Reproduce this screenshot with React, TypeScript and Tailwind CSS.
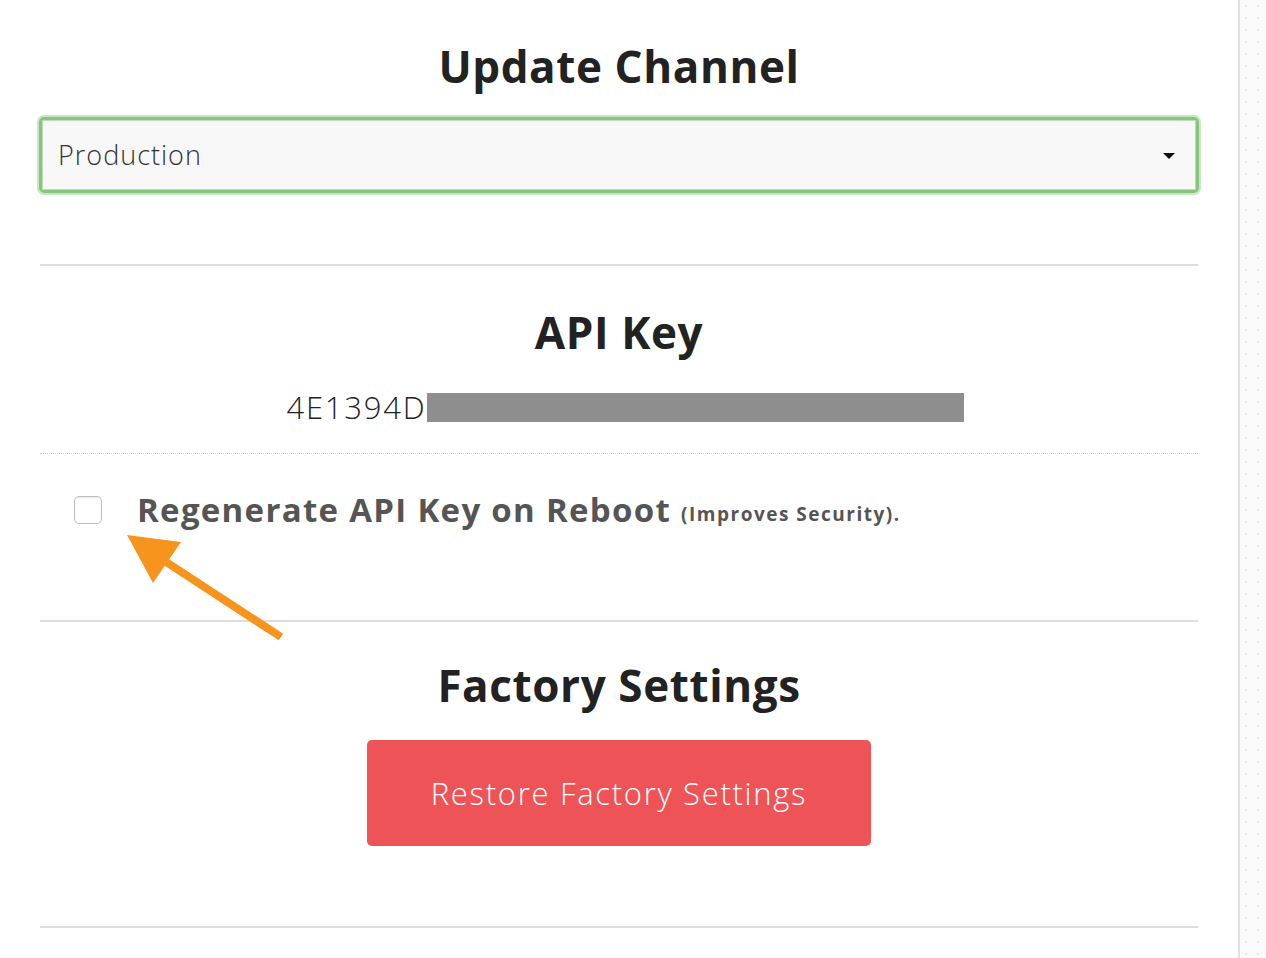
import React from 'react'

const Divider = ({ dotted }: { dotted?: boolean }) => (
    <div className={dotted ? "border-t border-dotted border-[#c8c8c8]" : "h-[2px] bg-[#dddddd]"} />
)

const App: React.FC = () => {
    return (
        <div className="relative flex min-h-[958px] w-full bg-white font-['Open_Sans',sans-serif] text-[#222]">
            <div className="flex-1 flex flex-col px-10 pt-[38px]">
                <h2 className="text-center text-[44px] font-bold leading-[56px] tracking-[0.6px]">Update Channel</h2>
                <div className="mt-[23px] rounded-[5px] border-[3px] border-[#86c67e] shadow-[0_0_0_2px_#c7e6c2] -mx-[1px]">
                    <div className="relative flex items-center h-[70px] bg-[#f8f8f8] border border-[#bcdcb6] pl-[15px]">
                        <span className="text-[27px] font-light text-[#333] tracking-[1px]">Production</span>
                        <span className="absolute right-[20px] top-[32px] w-0 h-0 border-l-[6px] border-r-[6px] border-t-[6px] border-l-transparent border-r-transparent border-t-[#111]" />
                    </div>
                </div>

                <div className="mt-[71px]"><Divider /></div>

                <h2 className="mt-[38px] text-center text-[44px] font-bold leading-[56px] tracking-[0.6px]">API Key</h2>
                <div className="mt-[32px] flex justify-center items-center">
                    <div className="flex items-center ml-[12px]">
                        <span className="text-[31px] font-light text-[#222] leading-[30px] tracking-[1.8px]">4E1394D</span>
                        <span className="w-[537px] h-[29px] bg-[#8e8e8e]" />
                    </div>
                </div>

                <div className="mt-[31px]"><Divider dotted /></div>

                <div className="mt-[36px] flex items-center pl-[34px]">
                    <span className="w-[28px] h-[28px] rounded-[5px] border border-[#bdbdbd] bg-white shadow-[inset_0_1px_2px_rgba(0,0,0,0.08)]" />
                    <span className="ml-[35px] text-[33px] font-bold text-[#555] leading-[40px] tracking-[1.3px]">Regenerate API Key on Reboot</span>
                    <span className="ml-[10px] mt-[8px] text-[19px] font-bold text-[#555] tracking-[1.5px]">(Improves Security).</span>
                </div>

                <div className="mt-[90px]"><Divider /></div>

                <h2 className="mt-[35px] text-center text-[44px] font-bold leading-[56px] tracking-[0.6px]">Factory Settings</h2>
                <div className="mt-[27px] flex justify-center">
                    <button className="w-[504px] h-[106px] rounded-[5px] bg-[#ee5457] text-white text-[31px] font-light tracking-[1.7px]">
                        Restore Factory Settings
                    </button>
                </div>

                <div className="mt-[80px]"><Divider /></div>
            </div>

            <div className="w-[28px] border-l-2 border-[#e2e2e2] bg-[#fafafa] bg-[radial-gradient(#e6e6e6_1.5px,transparent_1.5px)] bg-[length:12px_12px]" />

            <svg className="absolute left-0 top-0 pointer-events-none" width="400" height="700" viewBox="0 0 400 700">
                <line x1="281" y1="637" x2="160" y2="558" stroke="#f7941d" strokeWidth="8" />
                <polygon points="127,535 181,542 153,583" fill="#f7941d" />
            </svg>
        </div>
    )
}

export default App
